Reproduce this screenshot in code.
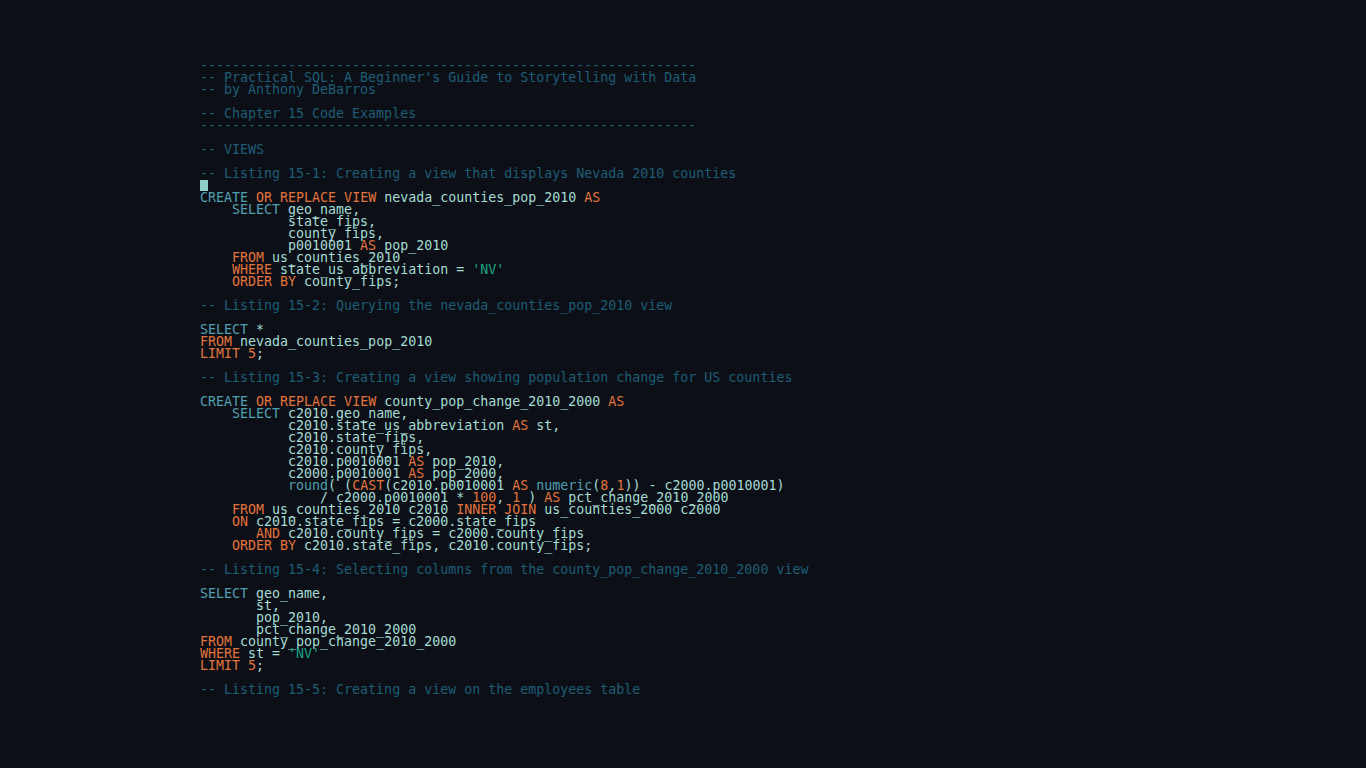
import React from "react";

type Seg = [string, string];

const C = "text-[#1f5d76]";
const K = "text-[#529fb1]";
const O = "text-[#e3733d]";
const I = "text-[#a6ddd6]";
const S = "text-[#19a586]";

const dash = "-".repeat(62);

const lines: (Seg[] | "cursor")[] = [
  [[dash, C]],
  [["-- Practical SQL: A Beginner's Guide to Storytelling with Data", C]],
  [["-- by Anthony DeBarros", C]],
  [],
  [["-- Chapter 15 Code Examples", C]],
  [[dash, C]],
  [],
  [["-- VIEWS", C]],
  [],
  [["-- Listing 15-1: Creating a view that displays Nevada 2010 counties", C]],
  "cursor",
  [["CREATE", K], [" ", I], ["OR REPLACE VIEW", O], [" nevada_counties_pop_2010 ", I], ["AS", O]],
  [["    ", I], ["SELECT", K], [" geo_name,", I]],
  [["           state_fips,", I]],
  [["           county_fips,", I]],
  [["           p0010001 ", I], ["AS", O], [" pop_2010", I]],
  [["    ", I], ["FROM", O], [" us_counties_2010", I]],
  [["    ", I], ["WHERE", O], [" state_us_abbreviation = ", I], ["'NV'", S]],
  [["    ", I], ["ORDER BY", O], [" county_fips;", I]],
  [],
  [["-- Listing 15-2: Querying the nevada_counties_pop_2010 view", C]],
  [],
  [["SELECT", K], [" *", I]],
  [["FROM", O], [" nevada_counties_pop_2010", I]],
  [["LIMIT", O], [" ", I], ["5", O], [";", I]],
  [],
  [["-- Listing 15-3: Creating a view showing population change for US counties", C]],
  [],
  [["CREATE", K], [" ", I], ["OR REPLACE VIEW", O], [" county_pop_change_2010_2000 ", I], ["AS", O]],
  [["    ", I], ["SELECT", K], [" c2010.geo_name,", I]],
  [["           c2010.state_us_abbreviation ", I], ["AS", O], [" st,", I]],
  [["           c2010.state_fips,", I]],
  [["           c2010.county_fips,", I]],
  [["           c2010.p0010001 ", I], ["AS", O], [" pop_2010,", I]],
  [["           c2000.p0010001 ", I], ["AS", O], [" pop_2000,", I]],
  [
    ["           ", I],
    ["round", K],
    ["( (", I],
    ["CAST", O],
    ["(c2010.p0010001 ", I],
    ["AS", O],
    [" ", I],
    ["numeric", K],
    ["(", I],
    ["8", O],
    [",", I],
    ["1", O],
    [")) - c2000.p0010001)", I],
  ],
  [
    ["               / c2000.p0010001 * ", I],
    ["100", O],
    [", ", I],
    ["1", O],
    [" ) ", I],
    ["AS", O],
    [" pct_change_2010_2000", I],
  ],
  [["    ", I], ["FROM", O], [" us_counties_2010 c2010 ", I], ["INNER JOIN", O], [" us_counties_2000 c2000", I]],
  [["    ", I], ["ON", O], [" c2010.state_fips = c2000.state_fips", I]],
  [["       ", I], ["AND", O], [" c2010.county_fips = c2000.county_fips", I]],
  [["    ", I], ["ORDER BY", O], [" c2010.state_fips, c2010.county_fips;", I]],
  [],
  [["-- Listing 15-4: Selecting columns from the county_pop_change_2010_2000 view", C]],
  [],
  [["SELECT", K], [" geo_name,", I]],
  [["       st,", I]],
  [["       pop_2010,", I]],
  [["       pct_change_2010_2000", I]],
  [["FROM", O], [" county_pop_change_2010_2000", I]],
  [["WHERE", O], [" st = ", I], ["'NV'", S]],
  [["LIMIT", O], [" ", I], ["5", O], [";", I]],
  [],
  [["-- Listing 15-5: Creating a view on the employees table", C]],
];

export default function App() {
  return (
    <div className="w-[1366px] h-[768px] overflow-hidden bg-[#0c1016]">
      <div
        className="pt-[60px] pl-[200px] text-[13.3px] leading-[12px] whitespace-pre"
        style={{ fontFamily: '"DejaVu Sans Mono", "Liberation Mono", monospace' }}
      >
        {lines.map((l, i) =>
          l === "cursor" ? (
            <div key={i} className="h-[12px]">
              <span className="block w-[8px] h-[11px] bg-[#8fcfc8]" />
            </div>
          ) : (
            <div key={i} className="h-[12px]">
              {l.length === 0 ? " " : l.map((s, j) => (
                <span key={j} className={s[1]}>
                  {s[0]}
                </span>
              ))}
            </div>
          )
        )}
      </div>
    </div>
  );
}
